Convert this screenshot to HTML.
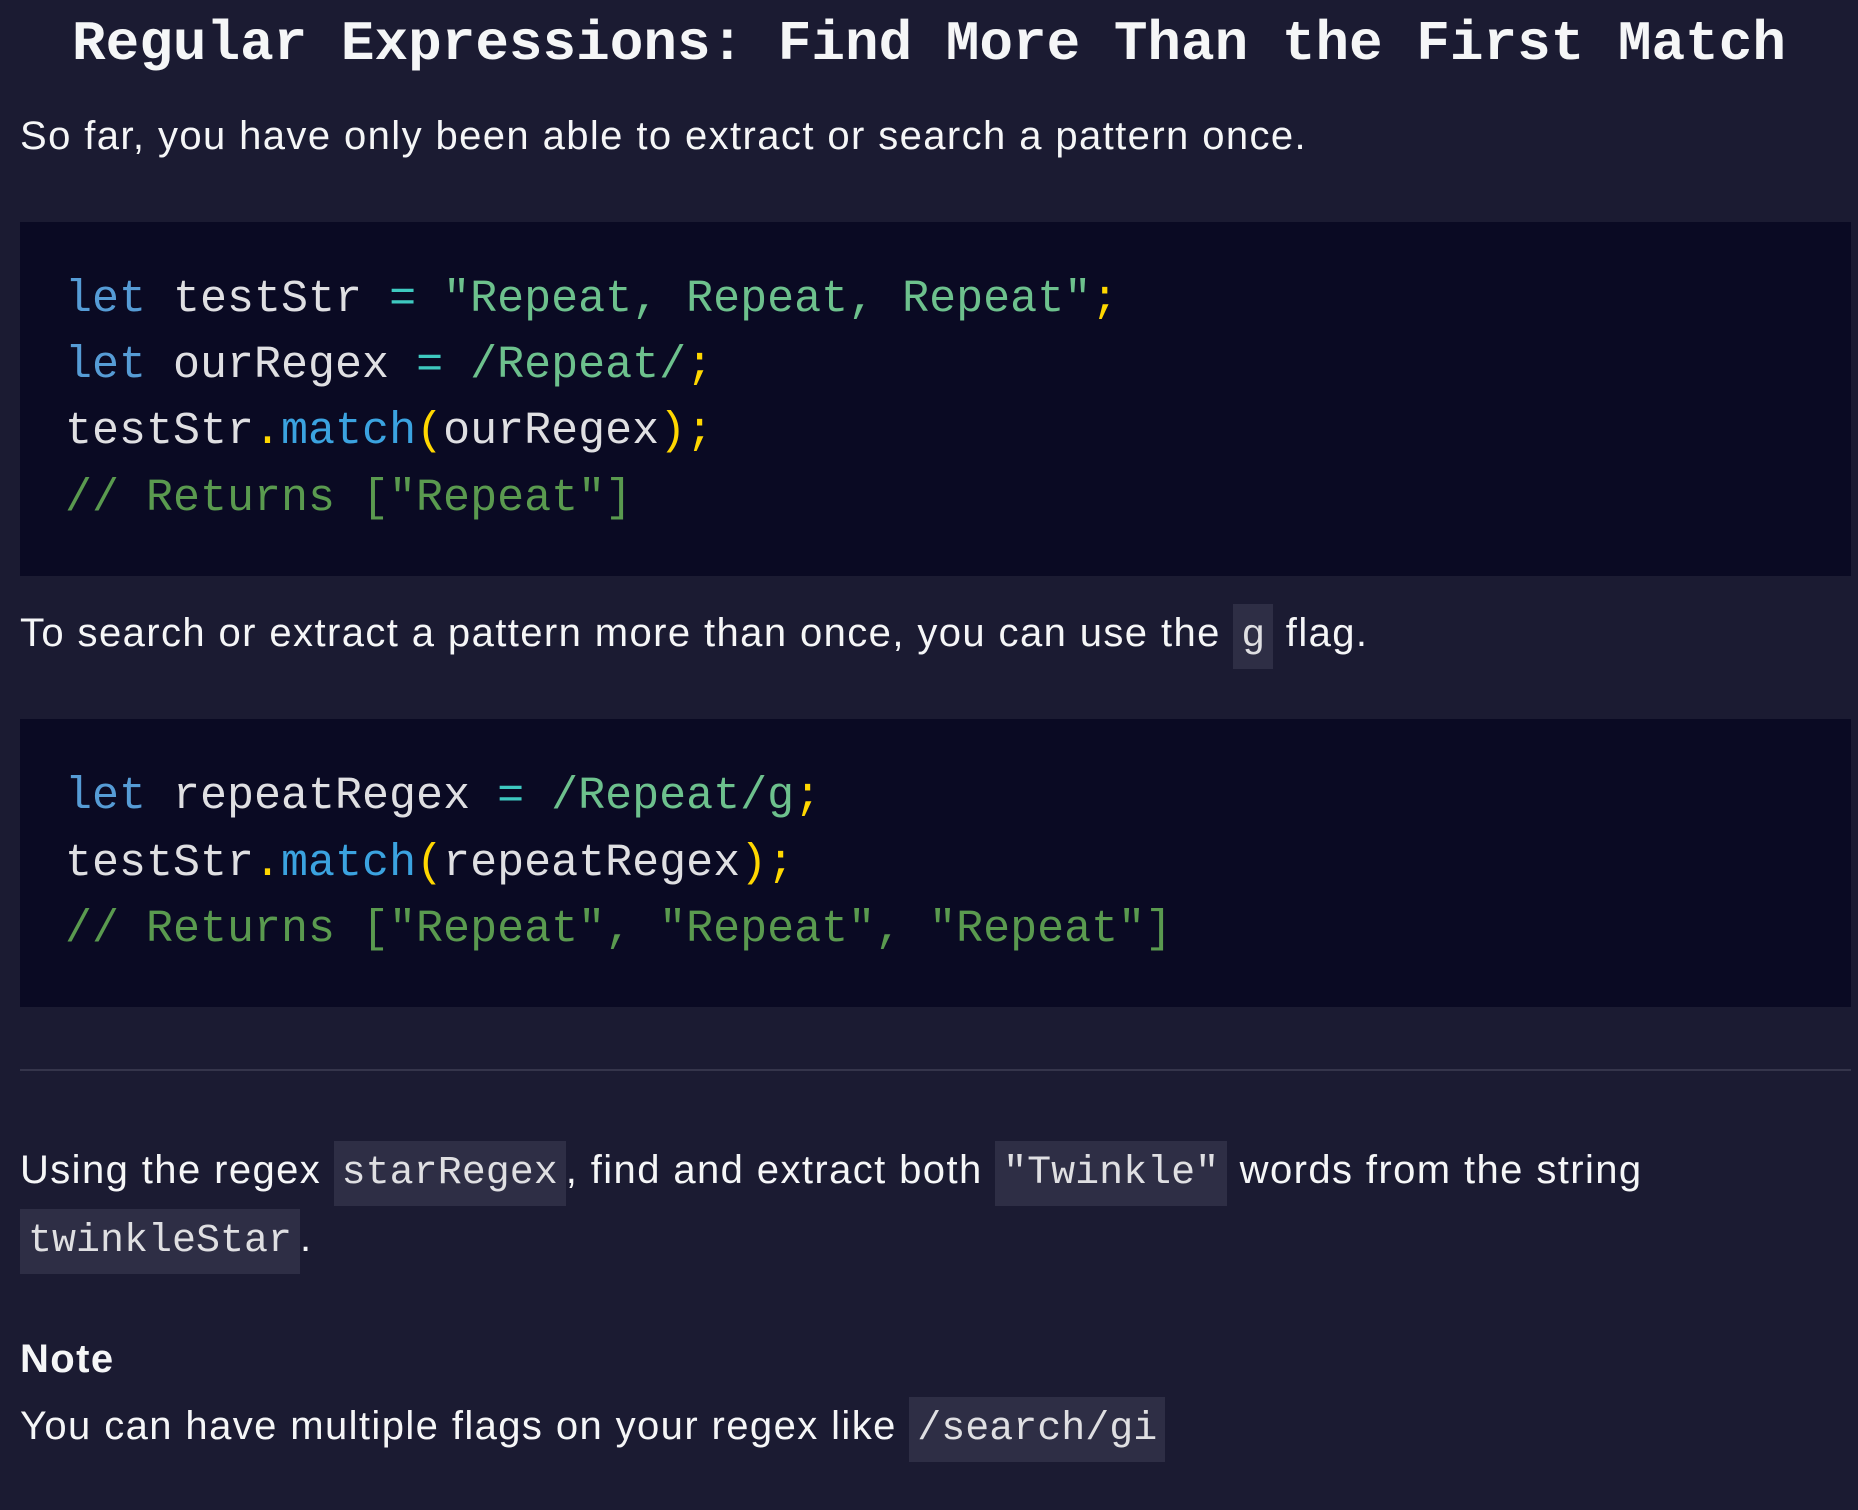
<!DOCTYPE html>
<html><head><meta charset="utf-8"><style>
html,body{margin:0;padding:0;background:#1b1b32;width:1858px;height:1510px;overflow:hidden}
body{position:relative;color:#f5f6f7;font-family:"Liberation Sans",sans-serif}
.l{position:absolute;left:20px;height:66px;line-height:66px;white-space:pre;font-size:40px;letter-spacing:1.4px}
.t{position:absolute;left:0;width:1858px;text-align:center;top:9px;height:70px;line-height:70px;white-space:nowrap;font-family:"Liberation Mono",monospace;font-weight:bold;font-size:56px;letter-spacing:0}
.cb{position:absolute;left:20px;width:1831px;background:#0a0a23}
.c{position:absolute;left:65px;height:66px;line-height:66px;white-space:pre;font-family:"Liberation Mono",monospace;font-size:45px;color:#dfdfe2}
.k{color:#569cd6}.s{color:#6dc18d}.o{color:#3ec9c0}.y{color:#ffd700}.m{color:#3ba3e0}.cm{color:#5a9a4f}
code{font-family:"Liberation Mono",monospace;font-size:40px;background:#2e2e45;color:#dfdfe2;padding:10px 8px;letter-spacing:0}
.hr{position:absolute;left:20px;width:1831px;top:1069px;height:2px;background:#35354b}
</style></head><body>
<div class="t">Regular Expressions: Find More Than the First Match</div>
<div class="l" style="top:103px">So far, you have only been able to extract or search a pattern once.</div>
<div class="cb" style="top:222px;height:354px"></div>
<div class="c" style="top:267px"><span class="k">let</span> testStr <span class="o">=</span> <span class="s">"Repeat, Repeat, Repeat"</span><span class="y">;</span></div>
<div class="c" style="top:333px"><span class="k">let</span> ourRegex <span class="o">=</span> <span class="s">/Repeat/</span><span class="y">;</span></div>
<div class="c" style="top:399px">testStr<span class="y">.</span><span class="m">match</span><span class="y">(</span>ourRegex<span class="y">);</span></div>
<div class="c cm" style="top:466px">// Returns ["Repeat"]</div>
<div class="l" style="top:600px">To search or extract a pattern more than once, you can use the <code>g</code> flag.</div>
<div class="cb" style="top:719px;height:288px"></div>
<div class="c" style="top:764px"><span class="k">let</span> repeatRegex <span class="o">=</span> <span class="s">/Repeat/g</span><span class="y">;</span></div>
<div class="c" style="top:831px">testStr<span class="y">.</span><span class="m">match</span><span class="y">(</span>repeatRegex<span class="y">);</span></div>
<div class="c cm" style="top:897px">// Returns ["Repeat", "Repeat", "Repeat"]</div>
<div class="hr"></div>
<div class="l" style="top:1137px">Using the regex <code>starRegex</code>, find and extract both <code>"Twinkle"</code> words from the string</div>
<div class="l" style="top:1205px"><code>twinkleStar</code>.</div>
<div class="l" style="top:1326px;font-weight:bold">Note</div>
<div class="l" style="top:1393px">You can have multiple flags on your regex like <code>/search/gi</code></div>
</body></html>
